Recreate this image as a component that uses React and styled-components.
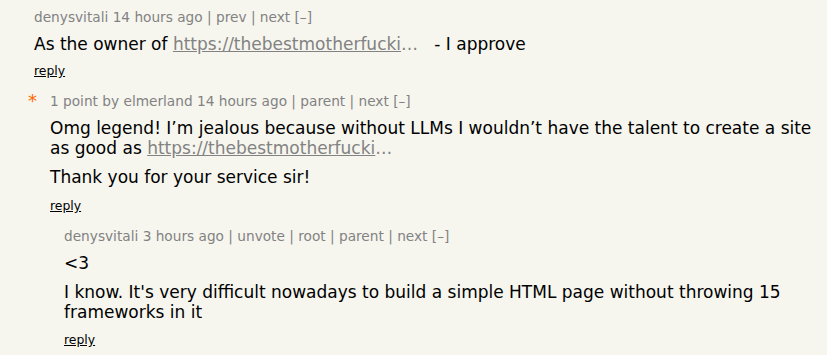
import React from "react";
import styled, { createGlobalStyle } from "styled-components";

const Global = createGlobalStyle`
  body {
    margin: 0;
    background: #f6f6ef;
    font-family: Verdana, "DejaVu Sans", sans-serif;
  }
`;

const Thread = styled.div`
  width: 827px;
  height: 355px;
  overflow: hidden;
  padding: 6px 0 0 0;
  box-sizing: border-box;
`;

const Comment = styled.div`
  display: flex;
  padding-left: ${(p) => p.indent}px;
  margin-bottom: ${(p) => p.gap || 0}px;
`;

const VoteCell = styled.div`
  width: ${(p) => p.width}px;
  flex-shrink: 0;
  color: #ff6600;
  font-size: 18px;
  line-height: 20px;
  padding-top: 1px;
`;

const Body = styled.div`
  flex: 1;
  min-width: 0;
`;

const Header = styled.div`
  color: #828282;
  font-size: 13.7px;
  line-height: 22px;
`;

const Text = styled.div`
  color: #000;
  font-size: 17px;
  line-height: 20px;
  max-width: ${(p) => p.max || 770}px;
  p {
    margin: 0;
    padding-top: 9px;
  }
  p:first-child {
    padding-top: 6px;
  }
`;

const Url = styled.a`
  color: #828282;
  text-decoration: underline;
`;

const Ellipsis = styled.span`
  color: #828282;
`;

const Reply = styled.div`
  font-size: 12.4px;
  margin-top: ${(p) => p.top || 9}px;
  a {
    color: #000;
    text-decoration: underline;
  }
`;

export default function App() {
  return (
    <>
      <Global />
      <Thread>
        <Comment indent={34} gap={12}>
          <Body>
            <Header>denysvitali 14 hours ago | prev | next [–]</Header>
            <Text>
              <p>
                As the owner of <Url>https://thebestmotherfucki</Url>
                <Ellipsis>…</Ellipsis>
                {"\u00a0\u00a0 - I approve"}
              </p>
            </Text>
            <Reply>
              <a>reply</a>
            </Reply>
          </Body>
        </Comment>

        <Comment indent={28} gap={12}>
          <VoteCell width={22}>*</VoteCell>
          <Body>
            <Header>1 point by elmerland 14 hours ago | parent | next [–]</Header>
            <Text max={770}>
              <p>
                Omg legend! I’m jealous because without LLMs I wouldn’t have the talent to create a site as good as{" "}
                <Url>https://thebestmotherfucki</Url>
                <Ellipsis>…</Ellipsis>
              </p>
              <p>Thank you for your service sir!</p>
            </Text>
            <Reply top={11}>
              <a>reply</a>
            </Reply>
          </Body>
        </Comment>

        <Comment indent={64}>
          <Body>
            <Header>denysvitali 3 hours ago | unvote | root | parent | next [–]</Header>
            <Text max={740}>
              <p>&lt;3</p>
              <p>
                I know. It's very difficult nowadays to build a simple HTML page without throwing 15 frameworks in it
              </p>
            </Text>
            <Reply top={10}>
              <a>reply</a>
            </Reply>
          </Body>
        </Comment>
      </Thread>
    </>
  );
}
